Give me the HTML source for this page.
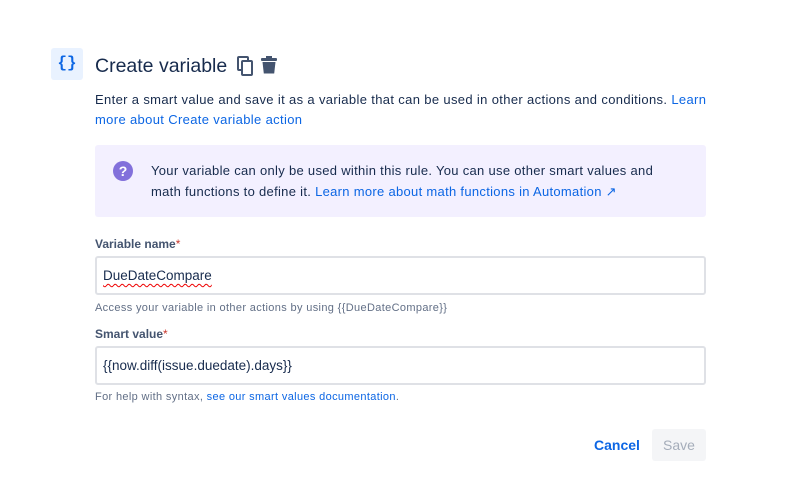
<!DOCTYPE html>
<html><head><meta charset="utf-8"><style>
body{margin:0;width:797px;height:496px;background:#fff;font-family:"Liberation Sans",sans-serif;color:#172b4d;position:relative;overflow:hidden}
.a{position:absolute}
a{color:#0c66e4;text-decoration:none}
.inp{position:absolute;left:95px;width:611px;height:39px;border:2px solid #dfe1e6;border-radius:3px;box-sizing:border-box;font-size:13.5px;padding:10px 6px;color:#172b4d}
.lbl{font-size:12px;font-weight:bold;color:#44546f}
.lbl span{color:#c9372c;font-weight:normal}
.help{font-size:11px;color:#626f86;letter-spacing:0.35px}
</style></head><body>
<div class="a" style="left:51px;top:48px;width:32px;height:32px;background:#e9f2ff;border-radius:3px;color:#0c66e4;font-weight:bold;font-size:16px;text-align:center;line-height:31px;font-family:'Liberation Mono',monospace">{}</div>
<div class="a" style="left:95px;top:55px;font-size:19.5px;color:#172b4d">Create variable</div>
<svg class="a" style="left:237px;top:56px" width="18" height="20" viewBox="0 0 18 20"><rect x="1" y="1" width="10" height="13" rx="1" fill="none" stroke="#44546f" stroke-width="2"/><rect x="5" y="5" width="10" height="14" rx="1" fill="#fff" stroke="#44546f" stroke-width="2"/></svg>
<svg class="a" style="left:261px;top:56px" width="16" height="18" viewBox="0 0 16 18"><rect x="0" y="2" width="16" height="3" rx="1" fill="#44546f"/><rect x="5" y="0" width="6" height="3" fill="#44546f"/><path d="M1.5 6h13l-1.3 11.5h-10.4z" fill="#44546f"/></svg>
<div class="a" style="left:95px;top:90px;width:620px;font-size:13px;line-height:20px;letter-spacing:0.35px;color:#172b4d">Enter a smart value and save it as a variable that can be used in other actions and conditions. <a>Learn more about Create variable action</a></div>
<div class="a" style="left:95px;top:145px;width:611px;height:72px;background:#f3f0ff;border-radius:3px"></div>
<svg class="a" style="left:113px;top:161px" width="20" height="20"><circle cx="10" cy="10" r="10" fill="#8270db"/><text x="10" y="15" text-anchor="middle" font-family="Liberation Sans" font-weight="bold" font-size="14" fill="#fff">?</text></svg>
<div class="a" style="left:151px;top:160px;width:530px;font-size:13px;line-height:21px;letter-spacing:0.3px;color:#172b4d">Your variable can only be used within this rule. You can use other smart values and math functions to define it. <a>Learn more about math functions in Automation ↗</a></div>
<div class="a lbl" style="left:95px;top:237px">Variable name<span>*</span></div>
<div class="inp" style="top:256px"><span style="text-decoration:underline wavy #e00;text-underline-offset:3px;text-decoration-thickness:1px">DueDateCompare</span></div>
<div class="a help" style="left:95px;top:302px">Access your variable in other actions by using {{DueDateCompare}}</div>
<div class="a lbl" style="left:95px;top:327px">Smart value<span>*</span></div>
<div class="inp" style="top:346px">{{now.diff(issue.duedate).days}}</div>
<div class="a help" style="left:95px;top:391px">For help with syntax, <a>see our smart values documentation</a>.</div>
<div class="a" style="left:594px;top:437px;font-size:14px;font-weight:bold;color:#0c66e4">Cancel</div>
<div class="a" style="left:652px;top:429px;width:54px;height:32px;background:#f4f5f7;border-radius:3px;color:#a5adba;font-size:14px;text-align:center;line-height:32px">Save</div>
</body></html>
